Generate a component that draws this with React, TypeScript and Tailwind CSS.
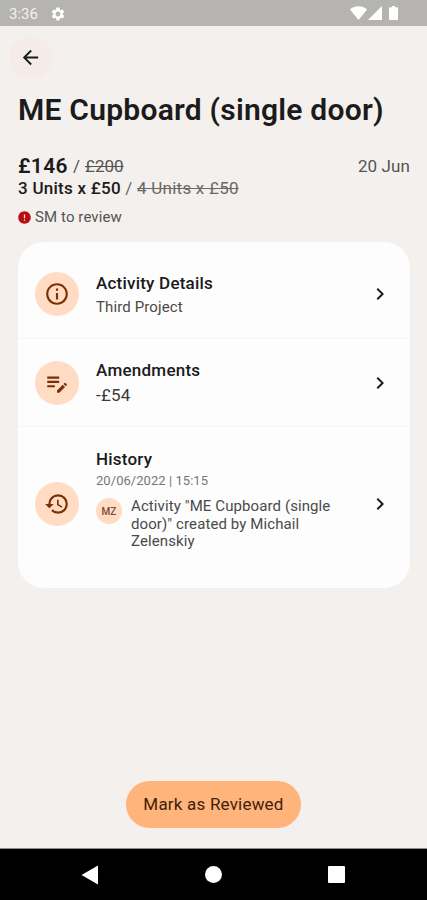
import React from "react";
import {
  MdArrowBack,
  MdChevronRight,
  MdEditNote,
  MdError,
  MdHistory,
  MdInfoOutline,
  MdSettings,
} from "react-icons/md";

interface CardRowProps {
  icon: React.ReactNode;
  className: string;
  children: React.ReactNode;
}

const CardRow = ({ icon, className, children }: CardRowProps) => (
  <button className={`flex w-full items-center pl-[17px] pr-[18px] text-left ${className}`}>
    <span className="flex size-[44px] shrink-0 items-center justify-center rounded-full bg-[#ffdcc3] text-[#7b2f06]">
      {icon}
    </span>
    <div className="ml-[17px] min-w-0 flex-1">{children}</div>
    <MdChevronRight className="size-6 shrink-0 text-[#1b1b1b]" />
  </button>
);

const StatusBar = () => (
  <div className="flex h-[26px] shrink-0 items-center bg-[#b5b4b0] pl-[9px] pr-[29px] text-white">
    <span className="w-[41px] pt-0.5 text-[15px] leading-none text-[#f3f2f0]">3:36</span>
    <MdSettings className="mt-0.5 size-[16px]" />
    <div className="ml-auto flex items-center">
      <svg className="h-[14px] w-[17px]" viewBox="0 0 17 14">
        <path d="M8.5 14 0 3.4C2.3 1.2 5.2.2 8.5.2s6.2 1 8.5 3.2z" fill="currentColor" />
      </svg>
      <svg className="ml-[1px] h-[14px] w-[14px]" viewBox="0 0 14 14">
        <path d="M14 0v14H0z" fill="currentColor" />
      </svg>
      <svg className="ml-[7px] h-[14px] w-[9px]" viewBox="0 0 9 14">
        <path d="M3 0h3v1.3h2.2c.5 0 .8.3.8.8v11.1c0 .5-.3.8-.8.8H.8c-.5 0-.8-.3-.8-.8V2.1c0-.5.3-.8.8-.8H3z" fill="currentColor" />
      </svg>
    </div>
  </div>
);

const NavigationBar = () => (
  <div className="flex h-[52px] shrink-0 items-center justify-between border-t border-[#8f8d8b] bg-black pl-[81px] pr-[82px] text-white">
    <svg className="h-[20px] w-[17px]" viewBox="0 0 17 20">
      <path d="M17 .5v19L.5 10z" fill="currentColor" />
    </svg>
    <span className="ml-[1px] size-[17px] rounded-full bg-white" />
    <span className="size-[17px] rounded-[1px] bg-white" />
  </div>
);

export default function App() {
  return (
    <div className="flex h-[900px] w-[427px] flex-col overflow-hidden bg-[#f4f0ed] font-['Roboto',sans-serif] text-[#1b1b1b]">
      <StatusBar />

      <main className="flex flex-1 flex-col">
        <button className="ml-[9px] mt-[10px] flex size-[43px] items-center justify-center rounded-full bg-[#f5ece7]">
          <MdArrowBack className="size-[23px]" />
        </button>

        <div className="pl-[18px] pr-[17px]">
          <h1 className="mt-[13px] whitespace-nowrap text-[30px] font-semibold leading-[36px] tracking-[0.24px]">
            ME Cupboard (single door)
          </h1>

          <div className="mt-[27px] flex h-[24px] items-center justify-between text-[17px] text-[#555453]">
            <p className="flex items-center whitespace-nowrap">
              <span className="text-[21px] font-semibold tracking-[0.4px] text-[#1b1b1b]">£146</span>
              <span className="mx-[5px]">/</span>
              <s>£200</s>
            </p>
            <span className="whitespace-nowrap tracking-[0.1px]">20 Jun</span>
          </div>
          <p className="whitespace-nowrap text-[17px] leading-[18px] tracking-[0.25px] text-[#6a6968]">
            <span className="font-medium text-[#1b1b1b]">3 Units x £50</span> /{" "}
            <s>4 Units x £50</s>
          </p>
          <div className="mt-[11px] flex h-[18px] items-center text-[15px] tracking-[0.1px] text-[#555453]">
            <MdError className="-ml-[1px] mr-[3px] size-[15px] text-[#b90d10]" />
            SM to review
          </div>
        </div>

        <section className="ml-[18px] mr-[17px] mt-[16px] rounded-[26px] bg-[#fdfdfd] py-2">
          <CardRow icon={<MdInfoOutline className="size-[26px]" />} className="h-[88px]">
            <h2 className="text-[17px] font-medium leading-[22px] tracking-[0.22px]">Activity Details</h2>
            <p className="mt-[3px] text-[15px] leading-[20px] tracking-[0.12px] text-[#4b4a49]">Third Project</p>
          </CardRow>
          <CardRow
            icon={<MdEditNote className="size-[26px]" />}
            className="h-[89px] border-y border-[#f5f4f3]"
          >
            <h2 className="text-[17px] font-medium leading-[22px] tracking-[0.25px]">Amendments</h2>
            <p className="mt-[3px] text-[17px] leading-[22px] tracking-[0.2px] text-[#3c3b3a]">-£54</p>
          </CardRow>
          <CardRow icon={<MdHistory className="size-[26px]" />} className="h-[153px]">
            <div className="pb-[8px]">
              <h2 className="text-[17px] font-medium leading-[22px] tracking-[0.22px]">History</h2>
              <p className="mt-[3px] text-[13px] leading-[16px] tracking-[0.05px] text-[#777]">
                20/06/2022 | 15:15
              </p>
              <div className="mt-[9px] flex">
                <span className="flex size-[26px] shrink-0 items-center justify-center rounded-full bg-[#ffdcc3] text-[10px] font-medium text-[#7b4a2c]">
                  MZ
                </span>
                <p className="ml-[9px] whitespace-nowrap text-[15px] leading-[17.5px] tracking-[0.1px] text-[#4b4a49]">
                  Activity "ME Cupboard (single
                  <br />
                  door)" created by Michail
                  <br />
                  Zelenskiy
                </p>
              </div>
            </div>
          </CardRow>
        </section>

        <button className="mx-auto mb-[20px] mt-auto h-[47px] w-[175px] rounded-full bg-[#ffb47b] text-[17px] tracking-[0.2px] text-[#3f2009]">
          Mark as Reviewed
        </button>
      </main>

      <NavigationBar />
    </div>
  );
}
